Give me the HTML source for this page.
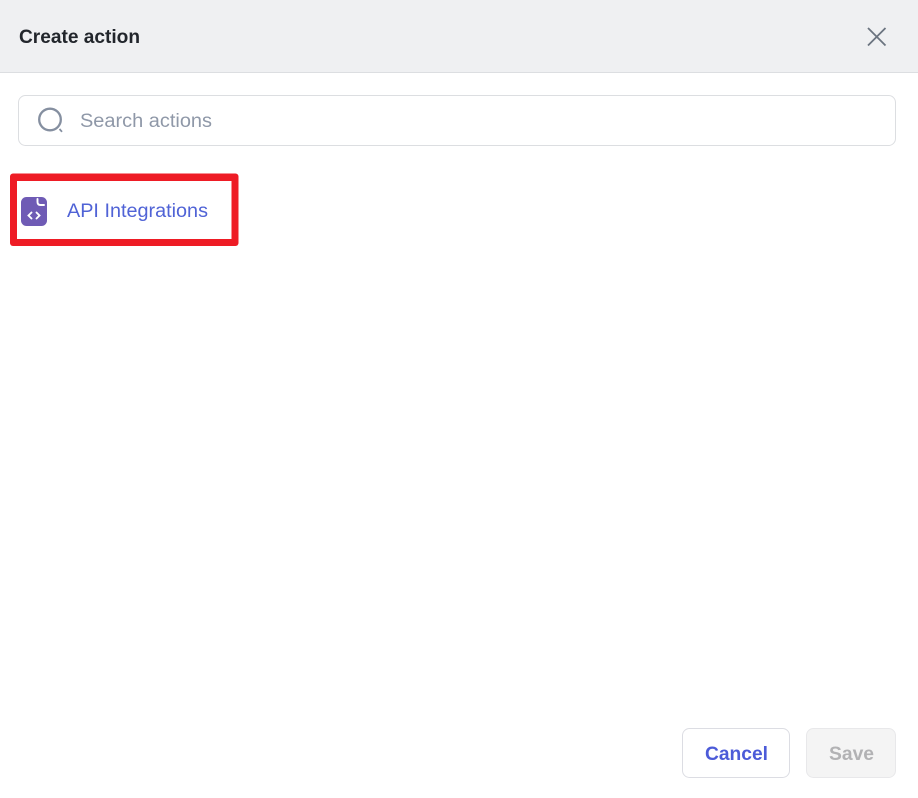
<!DOCTYPE html>
<html>
<head>
<meta charset="utf-8">
<title>Create action</title>
<style>
html,body{margin:0;padding:0;background:#fff;}
body{width:918px;height:798px;overflow:hidden;position:relative;}
svg{position:absolute;left:0;top:0;display:block;}
text{font-family:"Liberation Sans",sans-serif;}
</style>
</head>
<body>
<svg width="918" height="798" viewBox="0 0 918 798" xmlns="http://www.w3.org/2000/svg">
  <rect x="0" y="0" width="918" height="798" fill="#ffffff"/>
  <!-- header -->
  <rect x="0" y="0" width="918" height="72" fill="#eff0f2"/>
  <rect x="0" y="72" width="918" height="1" fill="#dcdee1"/>
  <text x="19" y="43" font-size="19" font-weight="700" fill="#22262c" textLength="121" lengthAdjust="spacingAndGlyphs">Create action</text>
  <path d="M868 28L885.500 45.500M885.500 28L868 45.500" stroke="#6b7480" stroke-width="1.800" fill="none"/>
  <!-- search -->
  <rect x="18.500" y="95.500" width="877" height="50" rx="7" fill="#fff" stroke="#dcdee1"/>
  <circle cx="50" cy="119.500" r="10.800" fill="none" stroke="#858fa0" stroke-width="2.300"/>
  <path d="M59.500 129L62 131.800" stroke="#858fa0" stroke-width="1.800" fill="none"/>
  <text x="80" y="127" font-size="19" fill="#8f98a8" textLength="132" lengthAdjust="spacingAndGlyphs">Search actions</text>
  <!-- red highlight -->
  <rect x="10" y="173.500" width="228.500" height="72.500" rx="3" fill="#ee1c25"/>
  <rect x="17" y="181" width="214.500" height="58" fill="#ffffff"/>
  <!-- item icon -->
  <rect x="21" y="197" width="26" height="29" rx="5.500" fill="#6f5bb5"/>
  <path d="M37.500 199V202Q37.500 205 40.500 205H44" fill="none" stroke="#fff" stroke-width="1.900" stroke-linecap="round"/>
  <path d="M31.500 212.500L28.500 215.500L31.500 218.500M36.500 212.500L39.500 215.500L36.500 218.500" fill="none" stroke="#fff" stroke-width="1.900" stroke-linecap="round"/>
  <text x="67" y="217" font-size="19" fill="#5063d6" textLength="141" lengthAdjust="spacingAndGlyphs">API Integrations</text>
  <!-- buttons -->
  <rect x="682.500" y="728.500" width="107" height="49" rx="7" fill="#fff" stroke="#dcdde3"/>
  <text x="705" y="760" font-size="19" font-weight="700" fill="#4c5bd8" textLength="63" lengthAdjust="spacingAndGlyphs">Cancel</text>
  <rect x="806.500" y="728.500" width="89" height="49" rx="7" fill="#f4f4f4" stroke="#e8e8ea"/>
  <text x="829" y="760" font-size="19" font-weight="700" fill="#b2b2b4" textLength="45" lengthAdjust="spacingAndGlyphs">Save</text>
</svg>
</body>
</html>
